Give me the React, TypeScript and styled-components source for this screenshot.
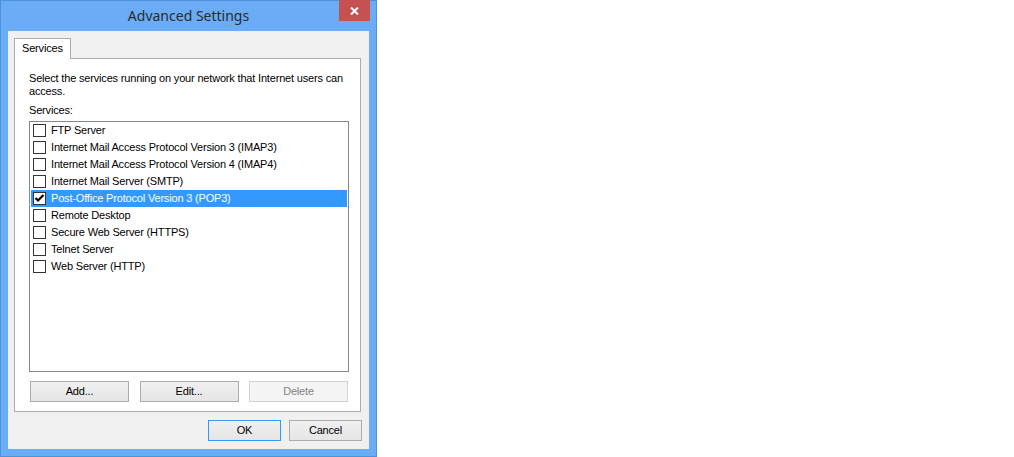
import React from "react";
import styled, { createGlobalStyle } from "styled-components";

const GlobalStyle = createGlobalStyle`
  html, body { margin: 0; padding: 0; background: #ffffff; }
  * { box-sizing: border-box; }
`;

const Window = styled.div`
  width: 377px;
  height: 457px;
  background: #6aacf5;
  border: 1px solid #4f92dc;
  display: flex;
  flex-direction: column;
  padding: 0 7px 7px 7px;
`;

const TitleBar = styled.div`
  height: 30px;
  margin: 0 -7px;
  display: grid;
  grid-template-columns: 1fr auto 1fr;
  align-items: start;
`;

const Title = styled.div`
  grid-column: 2;
  font-family: "Noto Sans", "Open Sans", sans-serif;
  font-size: 14px;
  line-height: 30px;
  color: #2b2b2b;
  white-space: nowrap;
`;

const CloseButton = styled.div`
  grid-column: 3;
  justify-self: end;
  width: 31px;
  height: 21px;
  margin-top: -1px;
  margin-right: 6px;
  background: #c75050;
  display: flex;
  align-items: center;
  justify-content: center;
`;

const Client = styled.div`
  flex: 1;
  background: #f0f0f0;
  display: flex;
  flex-direction: column;
  padding: 7px 7px 8px 6px;
  font-family: "Liberation Sans", Arial, sans-serif;
  font-size: 11px;
  letter-spacing: -0.18px;
  line-height: 13px;
  color: #000;
`;

const TabStrip = styled.div`
  display: flex;
  position: relative;
  z-index: 1;
`;

const Tab = styled.div`
  height: 21px;
  width: 57px;
  margin-bottom: -1px;
  background: #ffffff;
  border: 1px solid #acacac;
  border-bottom: none;
  padding: 3px 0 0 7px;
`;

const TabPage = styled.div`
  height: 354px;
  margin-right: 1px;
  background: #ffffff;
  border: 1px solid #acacac;
  display: flex;
  flex-direction: column;
  padding: 13px 11px 9px 14px;
`;

const Intro = styled.p`
  margin: 0;
`;

const Label = styled.div`
  margin-top: 6px;
`;

const ListBox = styled.div`
  flex: 1;
  margin-top: 4px;
  border: 1px solid #828790;
  background: #ffffff;
  padding: 0 1px;
  display: flex;
  flex-direction: column;
`;

const Row = styled.div<{ $selected?: boolean }>`
  height: 17px;
  display: flex;
  align-items: center;
  gap: 5px;
  padding-left: 2px;
  background: ${(p) => (p.$selected ? "#3399ff" : "transparent")};
  color: ${(p) => (p.$selected ? "#ffffff" : "#000000")};
  white-space: nowrap;
`;

const Check = styled.span`
  width: 13px;
  height: 13px;
  flex: none;
  border: 1px solid #333333;
  background: #ffffff;
  display: flex;
  align-items: center;
  justify-content: center;
`;

const ButtonRow = styled.div<{ $end?: boolean }>`
  display: flex;
  justify-content: ${(p) => (p.$end ? "flex-end" : "space-between")};
  gap: ${(p) => (p.$end ? "8px" : "0")};
  margin: ${(p) => (p.$end ? "8px 0 0 0" : "9px 1px 0 1px")};
`;

const Button = styled.div<{ $width: number; $default?: boolean; $disabled?: boolean }>`
  width: ${(p) => p.$width}px;
  height: 21px;
  display: flex;
  align-items: center;
  justify-content: center;
  border: 1px solid
    ${(p) => (p.$default ? "#3399ff" : p.$disabled ? "#d2d2d2" : "#acacac")};
  background: ${(p) =>
    p.$disabled ? "#f4f4f4" : "linear-gradient(#f0f0f0, #e5e5e5)"};
  color: ${(p) => (p.$disabled ? "#838383" : "#000000")};
`;

const services = [
  { name: "FTP Server" },
  { name: "Internet Mail Access Protocol Version 3 (IMAP3)" },
  { name: "Internet Mail Access Protocol Version 4 (IMAP4)" },
  { name: "Internet Mail Server (SMTP)" },
  { name: "Post-Office Protocol Version 3 (POP3)", checked: true, selected: true },
  { name: "Remote Desktop" },
  { name: "Secure Web Server (HTTPS)" },
  { name: "Telnet Server" },
  { name: "Web Server (HTTP)" },
];

export default function App() {
  return (
    <>
      <GlobalStyle />
      <Window>
        <TitleBar>
          <Title>Advanced Settings</Title>
          <CloseButton>
            <svg width="9" height="8" viewBox="0 0 9 8">
              <path d="M1 0.5 L8 7.5 M8 0.5 L1 7.5" stroke="#ffffff" strokeWidth="2" />
            </svg>
          </CloseButton>
        </TitleBar>
        <Client>
          <TabStrip>
            <Tab>Services</Tab>
          </TabStrip>
          <TabPage>
            <Intro>
              Select the services running on your network that Internet users can access.
            </Intro>
            <Label>Services:</Label>
            <ListBox>
              {services.map((s) => (
                <Row key={s.name} $selected={s.selected}>
                  <Check>
                    {s.checked && (
                      <svg width="11" height="11" viewBox="0 0 11 11">
                        <path
                          d="M1.5 5 L4 7.5 L9.5 2"
                          fill="none"
                          stroke="#000000"
                          strokeWidth="2.2"
                        />
                      </svg>
                    )}
                  </Check>
                  {s.name}
                </Row>
              ))}
            </ListBox>
            <ButtonRow>
              <Button $width={99}>Add...</Button>
              <Button $width={99}>Edit...</Button>
              <Button $width={99} $disabled>
                Delete
              </Button>
            </ButtonRow>
          </TabPage>
          <ButtonRow $end>
            <Button $width={73} $default>
              OK
            </Button>
            <Button $width={73}>Cancel</Button>
          </ButtonRow>
        </Client>
      </Window>
    </>
  );
}
